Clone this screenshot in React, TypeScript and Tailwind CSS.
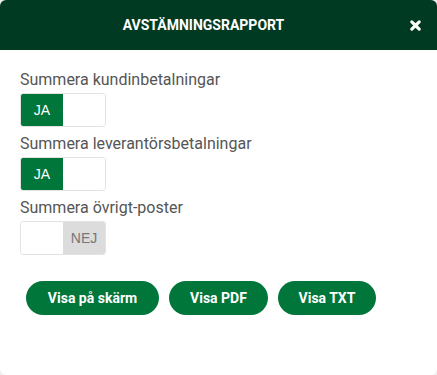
import React, { useState } from 'react';

// Toggle med JA/NEJ-segment
function YesNoToggle({ value, onChange }: { value: boolean; onChange: (v: boolean) => void }) {
  return (
    <button
      onClick={() => onChange(!value)}
      className="flex h-[34px] w-[86px] overflow-hidden rounded-[3px] border border-[#e3e3e3] bg-white"
    >
      {value ? (
        <>
          <span className="flex h-full w-[42px] items-center justify-center bg-[#00763a] font-['Liberation_Sans',Arial,sans-serif] text-[14px] text-white">
            JA
          </span>
          <span className="h-full flex-1 bg-white" />
        </>
      ) : (
        <>
          <span className="h-full w-[42px] bg-white" />
          <span className="flex h-full flex-1 items-center justify-center bg-[#dcdcdc] font-['Liberation_Sans',Arial,sans-serif] text-[14px] text-[#777]">
            NEJ
          </span>
        </>
      )}
    </button>
  );
}

export default function App() {
  const [kund, setKund] = useState(true);
  const [lev, setLev] = useState(true);
  const [ovrigt, setOvrigt] = useState(false);

  const rows = [
    { label: 'Summera kundinbetalningar', value: kund, set: setKund },
    { label: 'Summera leverantörsbetalningar', value: lev, set: setLev },
    { label: 'Summera övrigt-poster', value: ovrigt, set: setOvrigt },
  ];

  return (
    <div className="h-[375px] w-[437px] bg-[#eeeeee]">
      <div className="flex h-[375px] flex-col overflow-hidden rounded-[6px] bg-white font-['Roboto',sans-serif]">
        {/* Header */}
        <div className="relative flex h-[50px] items-center justify-center bg-[#003a22] pr-[30px]">
          <h1 className="text-[14px] font-bold text-white">AVSTÄMNINGSRAPPORT</h1>
          <button className="absolute right-[16px] top-[20px] text-white">
            <svg width="11" height="11" viewBox="0 0 12 12">
              <path d="M2 2 L10 10 M10 2 L2 10" stroke="currentColor" strokeWidth="3.4" strokeLinecap="round" />
            </svg>
          </button>
        </div>

        {/* Body */}
        <div className="flex flex-col px-[20px] pt-[20px]">
          {rows.map((r) => (
            <div key={r.label} className="flex flex-col">
              <label className="text-[16px] leading-[19px] text-[#555]">{r.label}</label>
              <div className="mb-[7px] mt-[4px]">
                <YesNoToggle value={r.value} onChange={r.set} />
              </div>
            </div>
          ))}

          <div className="mt-[19px] flex gap-[10px] pl-[6px]">
            <button className="h-[34px] w-[133px] rounded-full bg-[#00763a] text-[14px] font-bold text-white">
              Visa på skärm
            </button>
            <button className="h-[34px] w-[99px] rounded-full bg-[#00763a] text-[14px] font-bold text-white">
              Visa PDF
            </button>
            <button className="h-[34px] w-[98px] rounded-full bg-[#00763a] text-[14px] font-bold text-white">
              Visa TXT
            </button>
          </div>
        </div>
      </div>
    </div>
  );
}
